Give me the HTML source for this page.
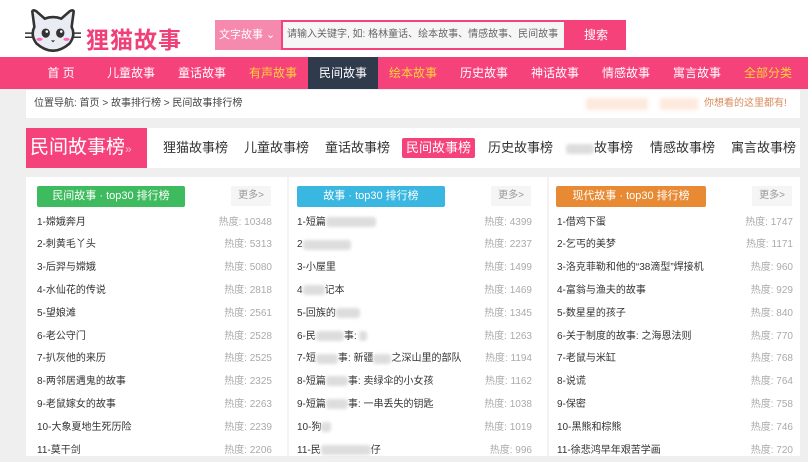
<!DOCTYPE html>
<html><head><meta charset="utf-8"><style>
*{margin:0;padding:0;box-sizing:border-box}
body{width:808px;height:456px;overflow:hidden;background:#efefef;font-family:"Liberation Sans","Noto Sans CJK SC",sans-serif;position:relative;font-size:10px;color:#333}
.a{position:absolute}
.nav span{position:absolute;top:0;height:32px;line-height:32px;color:#fff;font-size:12px;text-align:center}
.row{position:absolute;height:22px;line-height:22px;font-size:10px;color:#333}
.hot{position:absolute;font-size:10px;color:#aaa;text-align:right}
.blur{display:inline-block;background:#ddd;height:10px;vertical-align:middle;border-radius:3px;filter:blur(1.5px)}
</style></head><body>
<div class="a" style="left:0;top:0;width:808px;height:57px;background:#fff"></div>
<svg class="a" style="left:24px;top:8px" width="58" height="44" viewBox="0 0 56 42">
<path d="M10 18 L8 3 Q9 1 12 3 L20 10 Q28 7 36 10 L44 3 Q47 1 48 3 L46 18 Q50 26 44 34 Q36 41 28 41 Q20 41 12 34 Q6 26 10 18Z" fill="#e9edf3" stroke="#333" stroke-width="2.5"/>
<ellipse cx="21" cy="24" rx="4" ry="4.5" fill="#333"/><ellipse cx="35" cy="24" rx="4" ry="4.5" fill="#333"/>
<circle cx="22" cy="22.5" r="1.3" fill="#fff"/><circle cx="36" cy="22.5" r="1.3" fill="#fff"/>
<ellipse cx="15" cy="30" rx="3" ry="1.5" fill="#f6b"/><ellipse cx="41" cy="30" rx="3" ry="1.5" fill="#f6b"/>
<path d="M26 31 L30 31 L28 33Z" fill="#333"/>
<path d="M1 24 H8 M1 28 H8 M48 24 H55 M48 28 H55" stroke="#333" stroke-width="1.5"/>
</svg>
<div class="a" style="left:86px;top:21px;font-size:23px;font-weight:bold;color:#f0407a;letter-spacing:1px">狸猫故事</div>
<div class="a" style="left:215px;top:20px;width:66px;height:30px;background:#f58aae;color:#fff;font-size:11px;line-height:30px;padding-left:4px">文字故事 ⌄</div>
<div class="a" style="left:281px;top:20px;width:285px;height:30px;background:#f6f6f6;border:2px solid #f5427a;color:#666;font-size:10px;line-height:26px;padding-left:4px">请输入关键字, 如: 格林童话、绘本故事、情感故事、民间故事</div>
<div class="a" style="left:566px;top:20px;width:60px;height:30px;background:#f5427a;color:#fff;font-size:12px;line-height:30px;text-align:center">搜索</div>
<div class="a nav" style="left:0;top:57px;width:808px;height:32px;background:#f5427a">
<span style="left:36px;width:50px">首 页</span>
<span style="left:104px;width:54px">儿童故事</span>
<span style="left:173px;width:58px">童话故事</span>
<span style="left:245px;width:56px;color:#ffd23a">有声故事</span>
<span style="left:308px;width:70px;background:#2f3a4c">民间故事</span>
<span style="left:385px;width:56px;color:#ffd23a">绘本故事</span>
<span style="left:456px;width:56px">历史故事</span>
<span style="left:527px;width:56px">神话故事</span>
<span style="left:598px;width:56px">情感故事</span>
<span style="left:669px;width:56px">寓言故事</span>
<span style="left:740px;width:56px;color:#ffd23a">全部分类</span>
</div>
<div class="a" style="left:26px;top:90px;width:774px;height:28px;background:#fff"></div>
<div class="a" style="left:34px;top:90px;line-height:28px;font-size:10px;color:#444">位置导航: 首页 &gt; 故事排行榜 &gt; 民间故事排行榜</div>
<div class="a" style="left:586px;top:98px;width:62px;height:12px;background:#fde9dd;filter:blur(2px)"></div>
<div class="a" style="left:660px;top:98px;width:38px;height:12px;background:#fde9dd;filter:blur(2px)"></div>
<div class="a" style="left:704px;top:90px;line-height:28px;font-size:10px;color:#d98a5a">你想看的这里都有!</div>
<div class="a" style="left:26px;top:128px;width:774px;height:40px;background:#fff"></div>
<div class="a" style="left:26px;top:128px;width:121px;height:40px;background:#f5427a;color:#fff;font-size:19px;line-height:40px;padding-left:4px">民间故事榜<span style="font-size:12px;color:#fbb">»</span></div>
<div class="a" style="top:128px;left:0;line-height:40px;font-size:13px;color:#333;width:808px">
<span class="a" style="left:163px">狸猫故事榜</span><span class="a" style="left:244px">儿童故事榜</span><span class="a" style="left:325px">童话故事榜</span>
<span class="a" style="left:402px;top:10px;line-height:20px;height:20px;background:#f5427a;color:#fff;padding:0 4px;border-radius:2px">民间故事榜</span>
<span class="a" style="left:488px">历史故事榜</span><span class="a" style="left:566px"><span class="blur" style="width:28px"></span>故事榜</span><span class="a" style="left:650px">情感故事榜</span><span class="a" style="left:731px">寓言故事榜</span>
</div>
<div class="a" style="left:26px;top:177px;width:774px;height:279px;background:#fff"></div>
<div class="a" style="left:287px;top:177px;width:2px;height:279px;background:#f3f3f3"></div>
<div class="a" style="left:547px;top:177px;width:2px;height:279px;background:#f3f3f3"></div>
<div class="a" style="left:37px;top:186px;width:148px;height:21px;background:#3dbb5e;color:#fff;font-size:11px;line-height:21px;text-align:center;border-radius:2px">民间故事 · top30 排行榜</div>
<div class="a" style="left:297px;top:186px;width:148px;height:21px;background:#3ab7e0;color:#fff;font-size:11px;line-height:21px;text-align:center;border-radius:2px">故事 · top30 排行榜</div>
<div class="a" style="left:556px;top:186px;width:150px;height:21px;background:#e88a34;color:#fff;font-size:11px;line-height:21px;text-align:center;border-radius:2px">现代故事 · top30 排行榜</div>
<div class="a" style="left:231px;top:186px;width:40px;height:20px;background:#f5f5f5;color:#999;line-height:20px;text-align:center">更多&gt;</div>
<div class="a" style="left:491px;top:186px;width:40px;height:20px;background:#f5f5f5;color:#999;line-height:20px;text-align:center">更多&gt;</div>
<div class="a" style="left:752px;top:186px;width:40px;height:20px;background:#f5f5f5;color:#999;line-height:20px;text-align:center">更多&gt;</div>
<div id="rows"></div>
<script>
var c1=[["1-嫦娥奔月",10348],["2-刺黄毛丫头",5313],["3-后羿与嫦娥",5080],["4-水仙花的传说",2818],["5-望娘滩",2561],["6-老公守门",2528],["7-扒灰他的来历",2525],["8-两邻居遇鬼的故事",2325],["9-老鼠嫁女的故事",2263],["10-大象夏地生死历险",2239],["11-莫干剑",2206]];
var b='<span class="blur" style="width:W px"></span>';
function B(w){return b.replace('W ',w)}
var c2=[["1-短篇"+B(50),4399],["2"+B(48),2237],["3-小屋里",1499],["4"+B(22)+"记本",1469],["5-回族的"+B(24),1345],["6-民"+B(28)+"事: "+B(8),1263],["7-短"+B(22)+"事: 新疆"+B(18)+"之深山里的部队",1194],["8-短篇"+B(22)+"事: 卖绿伞的小女孩",1162],["9-短篇"+B(22)+"事: 一串丢失的钥匙",1038],["10-狗"+B(10),1019],["11-民"+B(50)+"仔",996]];
var c3=[["1-借鸡下蛋",1747],["2-乞丐的美梦",1171],["3-洛克菲勒和他的“38滴型”焊接机",960],["4-富翁与渔夫的故事",929],["5-数星星的孩子",840],["6-关于制度的故事: 之海恩法则",770],["7-老鼠与米缸",768],["8-说谎",764],["9-保密",758],["10-黑熊和棕熊",746],["11-徐悲鸿早年艰苦学画",720]];
var h='';
function col(d,x,r){for(var i=0;i<d.length;i++){var y=211.5+i*22.8;h+='<div class="row" style="left:'+x+'px;top:'+y+'px">'+d[i][0]+'</div><div class="hot" style="left:'+(r-80)+'px;width:80px;top:'+y+'px;line-height:22px">热度: '+d[i][1]+'</div>';}}
col(c1,37,272);col(c2,297,532);col(c3,557,793);
document.getElementById('rows').innerHTML=h;
</script>
</body></html>
